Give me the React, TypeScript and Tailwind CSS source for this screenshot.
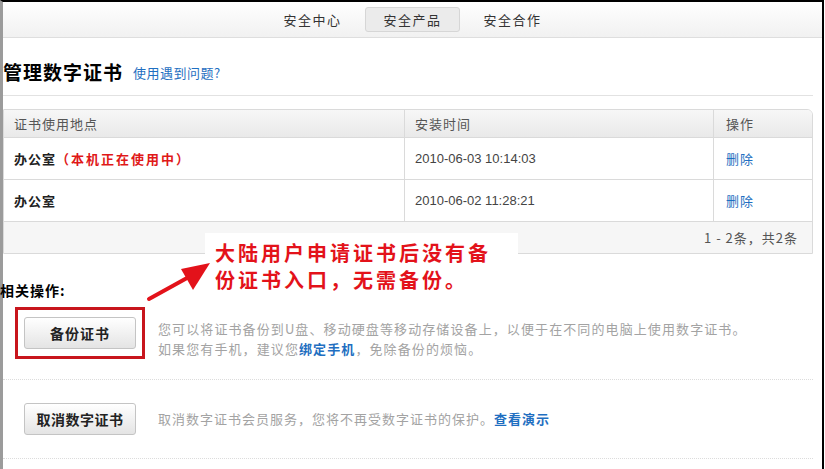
const cjk = '"Noto Sans CJK SC", "Liberation Sans", sans-serif';

const rows = [
  { place: '办公室', current: true, time: '2010-06-03 10:14:03' },
  { place: '办公室', current: false, time: '2010-06-02 11:28:21' },
];

function Arrow() {
  return (
    <svg className="absolute left-[140px] top-[255px]" width="72" height="48" viewBox="0 0 72 48">
      <line x1="6" y1="42" x2="44" y2="21" stroke="#e3121a" strokeWidth="4" strokeLinecap="round" />
      <polygon points="67,6 38,12 50,33" fill="#e3121a" />
    </svg>
  );
}

export default function App() {
  return (
    <div className="w-[825px] h-[469px] bg-white overflow-hidden" style={{ fontFamily: cjk }}>
      <div className="relative w-[824px] h-full flex flex-col border-t-2 border-t-black border-l-[3px] border-l-[#9b9b9b] border-r-2 border-r-black">
        {/* ── Top nav ───────────────────────────── */}
        <nav className="h-[36px] shrink-0 flex items-center justify-center gap-[22px] bg-gradient-to-b from-white to-[#f1f1f1] border-b border-[#dedede] text-[13px] tracking-[1.5px] text-[#333]">
          <a className="px-[2px]">安全中心</a>
          <a className="h-[25px] px-[17px] flex items-center rounded-[3px] bg-[#ebebeb] border border-[#d6d6d6]">安全产品</a>
          <a className="px-[2px]">安全合作</a>
        </nav>

        <div className="flex flex-col pr-[9px]">
          {/* ── Title ───────────────────────────── */}
          <div className="h-[58px] pt-[12px] flex items-center gap-[10px] border-b border-[#e2e2e2]">
            <h1 className="text-[19px] font-bold tracking-[1px] text-black">管理数字证书</h1>
            <a className="text-[13px] tracking-[0.5px] text-[#1f6fc1]">使用遇到问题?</a>
          </div>

          {/* ── Certificate table ──────────────── */}
          <div className="mt-[13px] border border-[#dadada] rounded-tr-[6px] overflow-hidden">
            <div className="grid grid-cols-[401px_309px_1fr] h-[28px] bg-gradient-to-b from-[#f7f7f7] to-[#e9e9e9] text-[13px] tracking-[1px] text-[#555] border-b border-[#dadada]">
              <div className="pl-[10px] flex items-center border-r border-[#dadada]">证书使用地点</div>
              <div className="pl-[10px] flex items-center border-r border-[#dadada]">安装时间</div>
              <div className="pl-[12px] flex items-center">操作</div>
            </div>
            {rows.map((r) => (
              <div key={r.time} className="grid grid-cols-[401px_309px_1fr] h-[42px] border-b border-[#dadada] text-[13px]">
                <div className="pl-[10px] flex items-center border-r border-[#dadada] font-bold tracking-[1px] text-[#222]">
                  {r.place}
                  {r.current && <span className="tracking-[2px] text-[#e01818]">（本机正在使用中）</span>}
                </div>
                <div className="pl-[10px] flex items-center border-r border-[#dadada] text-[#444]" style={{ fontFamily: '"Liberation Sans", sans-serif' }}>
                  {r.time}
                </div>
                <div className="pl-[12px] flex items-center tracking-[1px] text-[#1f6fc1]">删除</div>
              </div>
            ))}
            <div className="h-[31px] flex items-center justify-end pr-[14px] bg-[#f6f6f6] text-[13px] tracking-[1px] text-[#555]">
              1 - 2条，共2条
            </div>
          </div>

          {/* ── Related actions ────────────────── */}
          <p className="mt-[26px] -ml-[3px] text-[14px] leading-[20px] font-bold tracking-[1px] text-black">相关操作:</p>

          <div className="mt-[7px] flex items-start">
            <div className="ml-[12px] w-[130px] h-[52px] flex items-center justify-center border-[3px] border-[#c8161d]">
              <button className="w-[112px] h-[32px] rounded-[3px] border border-[#c4c4c4] bg-gradient-to-b from-white to-[#e4e4e4] text-[14px] font-bold tracking-[1px] text-[#222]">
                备份证书
              </button>
            </div>
            <div className="ml-[13px] pt-[12px] text-[13px] leading-[20px] tracking-[1.1px] text-[#a3a3a3]">
              <p>您可以将证书备份到U盘、移动硬盘等移动存储设备上，以便于在不同的电脑上使用数字证书。</p>
              <p>
                如果您有手机，建议您<a className="font-bold text-[#1f6fc1]">绑定手机</a>，免除备份的烦恼。
              </p>
            </div>
          </div>

          <div className="mt-[20px] border-t border-dotted border-[#dcdcdc]" />

          <div className="mt-[23px] flex items-center">
            <button className="ml-[21px] w-[112px] h-[32px] rounded-[3px] border border-[#c4c4c4] bg-gradient-to-b from-white to-[#e4e4e4] text-[14px] font-bold tracking-[0.5px] text-[#222]">
              取消数字证书
            </button>
            <p className="ml-[22px] text-[13px] tracking-[1px] text-[#a3a3a3]">
              取消数字证书会员服务，您将不再受数字证书的保护。<a className="font-bold text-[#1f6fc1]">查看演示</a>
            </p>
          </div>

          <div className="mt-[23px] border-t border-dotted border-[#dcdcdc]" />
        </div>

        {/* ── Annotation callout ───────────────── */}
        <div className="absolute left-[202px] top-[231px] w-[313px] h-[60px] bg-white pl-[10px] pt-[6px] text-[20px] leading-[27px] font-bold tracking-[3px] text-[#e3121a]">
          <p>大陆用户申请证书后没有备</p>
          <p>份证书入口，无需备份。</p>
        </div>
        <Arrow />
      </div>
    </div>
  );
}
